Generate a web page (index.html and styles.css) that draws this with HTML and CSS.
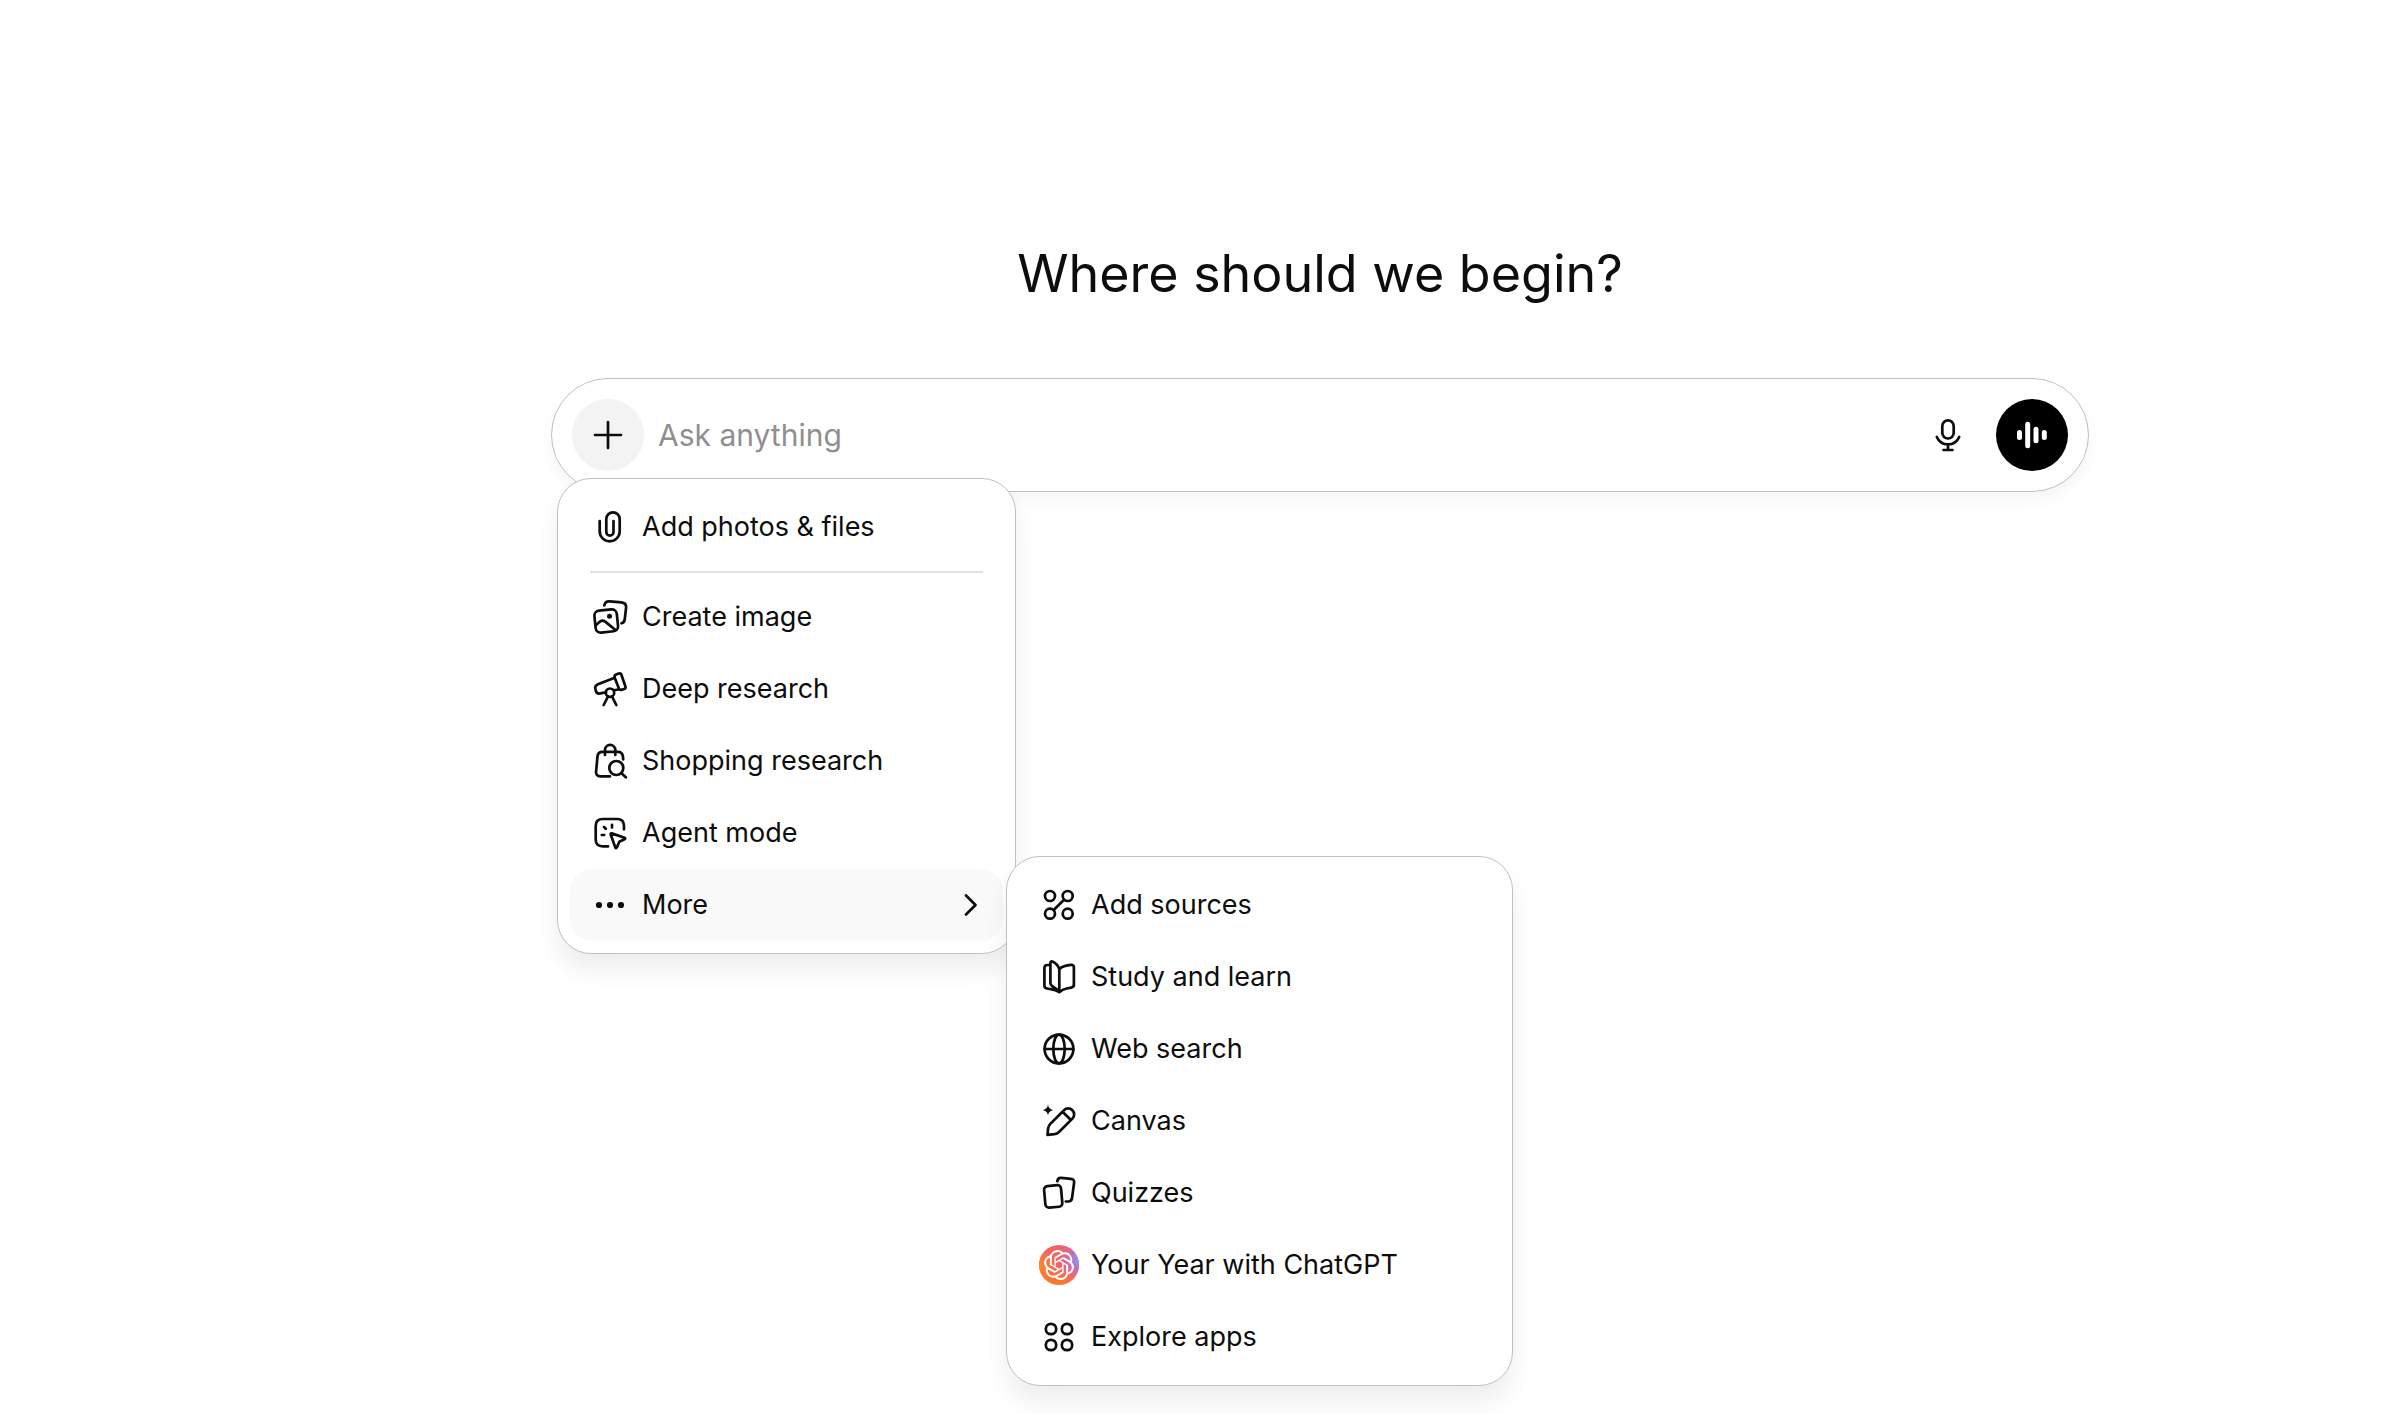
FILE: index.html
```html
<!DOCTYPE html>
<html lang="en">

<head>
    <title>ChatGPT</title>
    <meta charset="UTF-8" />
    <meta name="viewport" content="width=device-width,initial-scale=1" />
    <link rel="stylesheet" href="styles.css">
</head>

<body>
    <main>
        <h1>Where should we begin?</h1>
        <form class="composer">
            <div class="add">
                <button type="button" class="round add-button" aria-label="Add files and more">
                    <svg class="icon" viewBox="0 0 40 40"><path d="M20 7v26M7 20h26" /></svg>
                </button>
                <div class="menu tools-menu">
                    <button type="button" class="item">
                        <svg class="icon" viewBox="0 0 40 40"><path d="M9.7 14v10.3a10 10 0 0 0 20 0V12a6.7 6.7 0 0 0-13.4 0v13a3.6 3.6 0 0 0 7.2 0V14" /></svg>
                        Add photos &amp; files
                    </button>
                    <hr>
                    <button type="button" class="item">
                        <svg class="icon" viewBox="0 0 40 40">
                            <rect x="5" y="13" width="22.5" height="22" rx="5" transform="rotate(-6 16.2 24.2)" />
                            <path d="M5.5 28.5L10 24.6q2.5-2 5.2 0L25.5 33M14.3 8.500q.8-4.500 5.200-4.200l12 1q5 .6 4.600 5.200l-1.300 11.500q-.4 3.600-3.300 4.300" />
                            <circle class="fill" cx="19.5" cy="19.3" r="2.5" />
                        </svg>
                        Create image
                    </button>
                    <button type="button" class="item">
                        <svg class="icon" viewBox="0 0 40 40">
                            <path d="M24.7 8.8L8 15.2q-3.6 1.6-2.6 5l.5 1.8q1 3.2 4.6 2.4l5.500-1.200M24.2 21.3l5-1M24.7 8.8q-.7-2.6 1.5-3.400l2.500-.9q2-.6 2.700 1.300l4 11.700q.6 2-1.200 2.500l-3 .9q-1.700.4-2.200-1.200zM18 27.500L13.700 36M22 27.500l4.300 8.500" />
                            <circle cx="20" cy="23.7" r="4.2" />
                        </svg>
                        Deep research
                    </button>
                    <button type="button" class="item">
                        <svg class="icon" viewBox="0 0 40 40">
                            <path d="M20 35.3h-9.500q-4.800 0-4.400-4.800l1.400-15q.4-4.700 5-4.700h15.200q4.700 0 5.200 4.700l.3 2.800M15 14V9a5 5 0 0 1 10.3 0v5M31.500 32.300l4.300 4" />
                            <circle cx="26.3" cy="27" r="7" />
                        </svg>
                        Shopping research
                    </button>
                    <button type="button" class="item">
                        <svg class="icon" viewBox="0 0 40 40">
                            <path d="M18 33.4h-5.300q-7 0-7-7V13q0-7 7-7H27q7 0 7 7v3.300M22 11.800v2.600M14 14l1.800 1.800M11.800 22h2.400M21.800 20.400l12.700 4.300q1.600.8 0 1.600l-5.200 2.500-2.400 5.600q-.9 1.500-1.600 0L20.700 21.500q-.2-1.300 1.100-1.100z" />
                        </svg>
                        Agent mode
                    </button>
                    <div class="submenu-anchor">
                        <button type="button" class="item active" aria-haspopup="menu" aria-expanded="true">
                            <svg class="icon solid" viewBox="0 0 40 40"><circle cx="9" cy="20" r="3.1" /><circle cx="20" cy="20" r="3.1" /><circle cx="31" cy="20" r="3.1" /></svg>
                            More
                            <svg class="icon chevron" viewBox="0 0 24 40"><path d="M7 10.5l9.500 9.500L7 29.500" /></svg>
                        </button>
                        <div class="menu more-menu">
                            <button type="button" class="item">
                                <svg class="icon" viewBox="0 0 40 40">
                                    <circle cx="11" cy="11" r="5" /><circle cx="28.7" cy="11" r="5" /><circle cx="11" cy="28.7" r="5" /><circle cx="28.7" cy="28.7" r="5" />
                                    <path d="M25 14.7L14.7 25" />
                                </svg>
                                Add sources
                            </button>
                            <button type="button" class="item">
                                <svg class="icon" viewBox="0 0 40 40">
                                    <path d="M11.3 8H8.500Q5.400 8 5.400 11v17.500q0 2.600 2.600 3l5 .9q4.500.8 7.300 2.800 2.900-2.700 7.300-3.700l4.700-.9q2.600-.5 2.600-3V10.500q0-2.800-2.800-2.600-8 .5-11.800 4.300v23M20.300 12.200q-1.200-4.400-6-7.300-2.700-1.400-2.900 1.300v19.600q0 2 1.600 3.200 4.800 2.800 7.300 6.200" />
                                </svg>
                                Study and learn
                            </button>
                            <button type="button" class="item">
                                <svg class="icon" viewBox="0 0 40 40">
                                    <circle cx="20" cy="20" r="14.4" /><ellipse cx="20" cy="20" rx="5.7" ry="14.4" />
                                    <path d="M5.6 20h28.8" />
                                </svg>
                                Web search
                            </button>
                            <button type="button" class="item">
                                <svg class="icon" viewBox="0 0 40 40">
                                    <path d="M8.5 33.800l.6-6.300q.3-2.700 2.200-4.600L25 9.200a5.900 5.900 0 0 1 8.400 8.400L20 31q-1.900 1.900-4.600 2.200zM23.500 10.800l8.200 8" />
                                    <path class="fill" d="M9 3.700q.8 4.500 5.300 5.300-4.500.8-5.300 5.300-.8-4.500-5.300-5.300 4.500-.8 5.300-5.300z" />
                                </svg>
                                Canvas
                            </button>
                            <button type="button" class="item">
                                <svg class="icon" viewBox="0 0 40 40">
                                    <rect x="5.7" y="12.6" width="17" height="21.6" rx="3.5" transform="rotate(-5 14.2 23.4)" />
                                    <path d="M18.3 8.200q.5-3.600 4-3.300l9.500.9q3.800.4 3.300 4L33 25.300q-.5 3.200-3.700 3.200h-2.500" />
                                </svg>
                                Quizzes
                            </button>
                            <button type="button" class="item">
                                <svg class="icon solid" viewBox="0 0 40 40">
                                    <defs>
                                        <linearGradient id="warm" x1="0.6" y1="0" x2="0.3" y2="1">
                                            <stop offset="0" stop-color="#f2616b" />
                                            <stop offset="0.5" stop-color="#f5655f" />
                                            <stop offset="1" stop-color="#fd7b22" />
                                        </linearGradient>
                                        <radialGradient id="cool" cx="1" cy="0.38" r="0.55">
                                            <stop offset="0" stop-color="#7f9cff" />
                                            <stop offset="0.4" stop-color="#b273d6" stop-opacity="0.85" />
                                            <stop offset="1" stop-color="#e8618f" stop-opacity="0" />
                                        </radialGradient>
                                        <radialGradient id="amber" cx="0" cy="0.5" r="0.4">
                                            <stop offset="0" stop-color="#ff8b1f" />
                                            <stop offset="1" stop-color="#ff8b1f" stop-opacity="0" />
                                        </radialGradient>
                                    </defs>
                                    <circle cx="20" cy="20" r="20" fill="url(#warm)" />
                                    <circle cx="20" cy="20" r="20" fill="url(#amber)" />
                                    <circle cx="20" cy="20" r="20" fill="url(#cool)" />
                                    <path fill="#fff" transform="translate(5 5) scale(1.25)" d="M22.2819 9.8211a5.9847 5.9847 0 0 0-.5157-4.9108 6.0462 6.0462 0 0 0-6.5098-2.9A6.0651 6.0651 0 0 0 4.9807 4.1818a5.9847 5.9847 0 0 0-3.9977 2.9 6.0462 6.0462 0 0 0 .7427 7.0966 5.98 5.98 0 0 0 .511 4.9107 6.051 6.051 0 0 0 6.5146 2.9001A5.9847 5.9847 0 0 0 13.2599 24a6.0557 6.0557 0 0 0 5.7718-4.2058 5.9894 5.9894 0 0 0 3.9977-2.9001 6.0557 6.0557 0 0 0-.7475-7.0729zm-9.022 12.6081a4.4755 4.4755 0 0 1-2.8764-1.0408l.1419-.0804 4.7783-2.7582a.7948.7948 0 0 0 .3927-.6813v-6.7369l2.02 1.1686a.071.071 0 0 1 .038.052v5.5826a4.504 4.504 0 0 1-4.4945 4.4944zm-9.6607-4.1254a4.4708 4.4708 0 0 1-.5346-3.0137l.142.0852 4.783 2.7582a.7712.7712 0 0 0 .7806 0l5.8428-3.3685v2.3324a.0804.0804 0 0 1-.0332.0615L9.74 19.9502a4.4992 4.4992 0 0 1-6.1408-1.6464zM2.3408 7.8956a4.485 4.485 0 0 1 2.3655-1.9728V11.6a.7664.7664 0 0 0 .3879.6765l5.8144 3.3543-2.0201 1.1685a.0757.0757 0 0 1-.071 0l-4.8303-2.7865A4.504 4.504 0 0 1 2.3408 7.872zm16.5963 3.8558L13.1038 8.364 15.1192 7.2a.0757.0757 0 0 1 .071 0l4.8303 2.7913a4.4944 4.4944 0 0 1-.6765 8.1042v-5.6772a.79.79 0 0 0-.407-.667zm2.0107-3.0231l-.142-.0852-4.7735-2.7818a.7759.7759 0 0 0-.7854 0L9.409 9.2297V6.8974a.0662.0662 0 0 1 .0284-.0615l4.8303-2.7866a4.4992 4.4992 0 0 1 6.6802 4.66zM8.3065 12.863l-2.02-1.1638a.0804.0804 0 0 1-.038-.0567V6.0742a4.4992 4.4992 0 0 1 7.3757-3.4537l-.142.0805L8.704 5.459a.7948.7948 0 0 0-.3927.6813zm1.0976-2.3654l2.602-1.4998 2.6069 1.4998v2.9994l-2.5974 1.4997-2.6067-1.4997Z" />
                                </svg>
                                Your Year with ChatGPT
                            </button>
                            <button type="button" class="item">
                                <svg class="icon" viewBox="0 0 40 40">
                                    <circle cx="12" cy="12" r="5.2" /><circle cx="28" cy="12" r="5.2" /><circle cx="12" cy="28" r="5.2" /><circle cx="28" cy="28" r="5.2" />
                                </svg>
                                Explore apps
                            </button>
                        </div>
                    </div>
                </div>
            </div>
            <input class="prompt" type="text" placeholder="Ask anything" aria-label="Ask anything">
            <button type="button" class="round" aria-label="Dictate">
                <svg class="icon" viewBox="0 0 40 40">
                    <rect x="14.3" y="5.3" width="11.4" height="18.2" rx="5.7" />
                    <path d="M8.8 22a12.2 12.2 0 0 0 22.4 0M20 29.5v5.3M15.5 35h9" />
                </svg>
            </button>
            <button type="button" class="round voice" aria-label="Use voice">
                <svg class="icon solid" viewBox="0 0 40 40">
                    <rect x="5" y="15" width="5" height="10" rx="2.5" /><rect x="13.2" y="6.7" width="5" height="26.6" rx="2.5" /><rect x="21.5" y="11.7" width="5" height="16.6" rx="2.5" /><rect x="29.8" y="15" width="5" height="10" rx="2.5" />
                </svg>
            </button>
        </form>
    </main>
</body>

</html>
```
FILE: styles.css
```css
* {
    box-sizing: border-box;
}

/* Variables */
:root {
    --text-color: #0d0d0d;
    --placeholder-color: #8f8f8f;
    --border-color: #c0c0c0;
    --hover-color: #f9f9f9;
}

body {
    margin: 0;
    min-height: 100vh;
    background: #fff;
    color: var(--text-color);
    font-family: Inter, "Liberation Sans", sans-serif;
}

button,
input {
    appearance: none;
    margin: 0;
    padding: 0;
    border: 0;
    background: none;
    color: inherit;
    font: inherit;
}

main {
    padding: 238px 40px 0 272px;
}

h1 {
    margin: 0 0 68px;
    font-size: 52px;
    font-weight: 400;
    line-height: 72px;
    text-align: center;
}

/* Composer */
.composer {
    display: flex;
    align-items: center;
    gap: 12px;
    max-width: 1538px;
    margin: 0 auto;
    padding: 20px;
    border: 1px solid var(--border-color);
    border-radius: 57px;
    box-shadow: 0 8px 16px rgba(0, 0, 0, 0.04);
}

.add {
    position: relative;
}

.round {
    display: flex;
    flex: none;
    align-items: center;
    justify-content: center;
    width: 72px;
    height: 72px;
    border-radius: 50%;
}

.add-button {
    background: #f3f3f3;
}

.voice {
    background: #000;
    color: #fff;
}

.prompt {
    flex: 1;
    min-width: 0;
    padding: 0 2px;
    font-size: 30px;
    line-height: 48px;
    outline: 0;
}

.prompt::placeholder {
    color: var(--placeholder-color);
    opacity: 1;
}

/* Icons */
.icon {
    flex: none;
    width: 40px;
    height: 40px;
    fill: none;
    stroke: currentColor;
    stroke-width: 2.7;
    stroke-linecap: round;
    stroke-linejoin: round;
}

.solid,
.fill {
    fill: currentColor;
    stroke: none;
}

/* Menus */
.menu {
    position: absolute;
    padding: 12px;
    border: 1px solid var(--border-color);
    border-radius: 34px;
    background: #fff;
    box-shadow: 0 16px 24px rgba(0, 0, 0, 0.07);
}

.tools-menu {
    top: 79px;
    left: -15px;
    z-index: 1;
    width: 459px;
}

.more-menu {
    top: -13px;
    left: 436px;
    width: 507px;
}

.menu hr {
    height: 2px;
    margin: 8px 20px;
    border: 0;
    background: #e2e2e2;
}

.item {
    display: flex;
    align-items: center;
    gap: 12px;
    width: 100%;
    height: 72px;
    padding: 0 20px;
    border-radius: 22px;
    font-size: 27px;
    line-height: 40px;
    text-align: left;
    white-space: nowrap;
}

.item.active {
    background: var(--hover-color);
}

.submenu-anchor {
    position: relative;
}

.chevron {
    width: 24px;
    margin-left: auto;
}
```
